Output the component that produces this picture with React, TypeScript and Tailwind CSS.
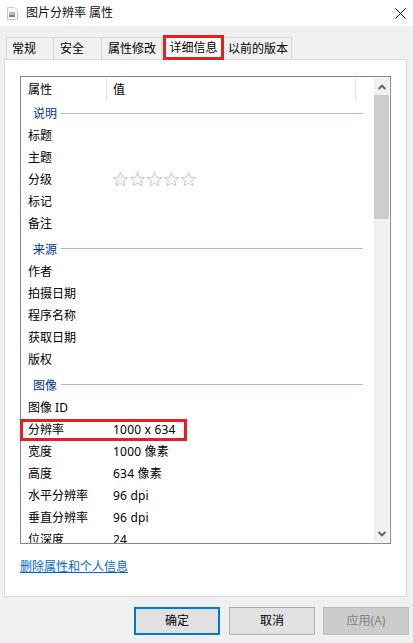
import React from "react";

const font = "font-['Noto_Sans','Noto_Sans_CJK_SC',sans-serif]";

function GroupRow({ label, first }: { label: string; first?: boolean }) {
  return (
    <div className={first ? "flex items-center h-[22px] shrink-0 pl-[12px] pr-[11px]" : "flex items-center h-[26px] shrink-0 pt-[3px] pl-[12px] pr-[11px]"}>
      <span className="text-[#003399] mr-[4px] pt-[2px]">{label}</span>
      <div className="flex-1 h-px bg-[#a9bde2]" />
    </div>
  );
}

function Row({ name, value, children }: { name: string; value?: string; children?: React.ReactNode }) {
  return (
    <div className="flex items-center h-[22px] shrink-0">
      <span className="w-[92px] pl-[7px] pt-[2px] shrink-0 text-black">{name}</span>
      {value ? <span className="text-black pt-[2px] tracking-[0.2px]">{value}</span> : null}
      {children}
    </div>
  );
}

function Star() {
  return (
    <svg width="17" height="16" viewBox="0 0 17 16" fill="#f7f7f7" stroke="#c9c9c9" strokeWidth="1">
      <path d="M8.5 1.5 10.5 6.2 15.6 6.6 11.7 9.9 12.9 14.8 8.5 12.2 4.1 14.8 5.3 9.9 1.4 6.6 6.5 6.2Z" />
    </svg>
  );
}

function Tab({ label, className }: { label: string; className: string }) {
  return (
    <div className={"h-[22px] flex items-center border-t border-r border-[#d9d9d9] bg-[#f0f0f0] " + className}>
      {label}
    </div>
  );
}

export default function App() {
  return (
    <div className={"w-[413px] h-[643px] bg-[#f0f0f0] text-[12px] leading-none flex flex-col overflow-hidden " + font}>
      <div className="h-[26px] bg-white flex items-center pl-[7px] pr-[6px] shrink-0">
        <svg width="11" height="13" viewBox="0 0 11 13" className="mr-[8px]">
          <path d="M.5.5h7l3 3v9h-10z" fill="#f8f8f8" stroke="#c8c8c8" />
          <rect x="2" y="5" width="6" height="5" fill="#a9bac8" />
          <rect x="2" y="8" width="6" height="2" fill="#71858f" />
        </svg>
        <span className="flex-1 text-[#111]">图片分辨率 属性</span>
        <svg width="11" height="11" viewBox="0 0 11 11" stroke="#111" strokeWidth="1" className="mr-[1px]">
          <path d="M.5.5l10 10M10.5.5l-10 10" />
        </svg>
      </div>

      <div className="flex items-end h-[33px] shrink-0 pl-[6px]">
        <Tab label="常规" className="w-[48px] border-l pl-[5px]" />
        <Tab label="安全" className="w-[48px] pl-[6px]" />
        <Tab label="属性修改" className="w-[60px] pl-[6px]" />
        <div className="w-[61px] h-[25px] mx-[1px] mb-[-1px] z-10 bg-white border-[3px] border-[#ed1c24] flex items-center justify-center">
          详细信息
        </div>
        <Tab label="以前的版本" className="w-[67px] pl-[3px]" />
      </div>

      <div className="ml-[4px] w-[403px] h-[538px] bg-white border border-[#d9d9d9] shrink-0 pt-[16px] pl-[15px]">
        <div className="w-[371px] h-[468px] border border-[#828790] flex">
          <div className="relative -ml-px pl-px flex-1 min-w-0 flex flex-col overflow-hidden">
            <div className="flex h-[25px] shrink-0">
              <div className="w-[86px] pl-[7px] flex items-center border-r border-[#e5e5e5] h-[23px] mt-px">属性</div>
              <div className="flex-1 pl-[6px] flex items-center border-r border-[#e5e5e5] h-[23px] mt-px mr-[18px]">值</div>
            </div>
            <GroupRow label="说明" first />
            <Row name="标题" />
            <Row name="主题" />
            <Row name="分级">
              <div className="flex -ml-px">
                <Star />
                <Star />
                <Star />
                <Star />
                <Star />
              </div>
            </Row>
            <Row name="标记" />
            <Row name="备注" />
            <GroupRow label="来源" />
            <Row name="作者" />
            <Row name="拍摄日期" />
            <Row name="程序名称" />
            <Row name="获取日期" />
            <Row name="版权" />
            <GroupRow label="图像" />
            <Row name="图像 ID" />
            <div className="relative shrink-0">
              <Row name="分辨率" value="1000 x 634" />
              <div className="absolute left-[-1px] top-[1px] w-[167px] h-[22px] border-[3px] border-[#ed1c24]" />
            </div>
            <Row name="宽度" value="1000 像素" />
            <Row name="高度" value="634 像素" />
            <Row name="水平分辨率" value="96 dpi" />
            <Row name="垂直分辨率" value="96 dpi" />
            <Row name="位深度" value="24" />
          </div>
          <div className="w-[15px] mr-px mt-px mb-px bg-[#f0f0f0] flex flex-col shrink-0">
            <div className="h-[17px] flex items-center justify-center shrink-0">
              <svg width="8" height="6" viewBox="0 0 8 6" fill="none" stroke="#606060" strokeWidth="2">
                <path d="M.7 5 4 1.6 7.3 5" />
              </svg>
            </div>
            <div className="h-[124px] bg-[#cdcdcd] shrink-0" />
            <div className="flex-1" />
            <div className="h-[17px] flex items-center justify-center shrink-0">
              <svg width="8" height="6" viewBox="0 0 8 6" fill="none" stroke="#606060" strokeWidth="2">
                <path d="M.7 1 4 4.4 7.3 1" />
              </svg>
            </div>
          </div>
        </div>
        <div className="mt-[17px] text-[#0066cc] underline">删除属性和个人信息</div>
      </div>

      <div className="flex justify-end gap-[8px] pt-[10px] pr-[4px]">
        <button className="w-[86px] h-[28px] mr-px bg-[#e1e1e1] border-[2px] border-[#0078d7] text-black">确定</button>
        <button className="w-[86px] h-[28px] bg-[#e1e1e1] border border-[#adadad] text-black">取消</button>
        <button className="w-[86px] h-[28px] bg-[#cccccc] border border-[#bfbfbf] text-[#838383]">应用(A)</button>
      </div>
    </div>
  );
}
